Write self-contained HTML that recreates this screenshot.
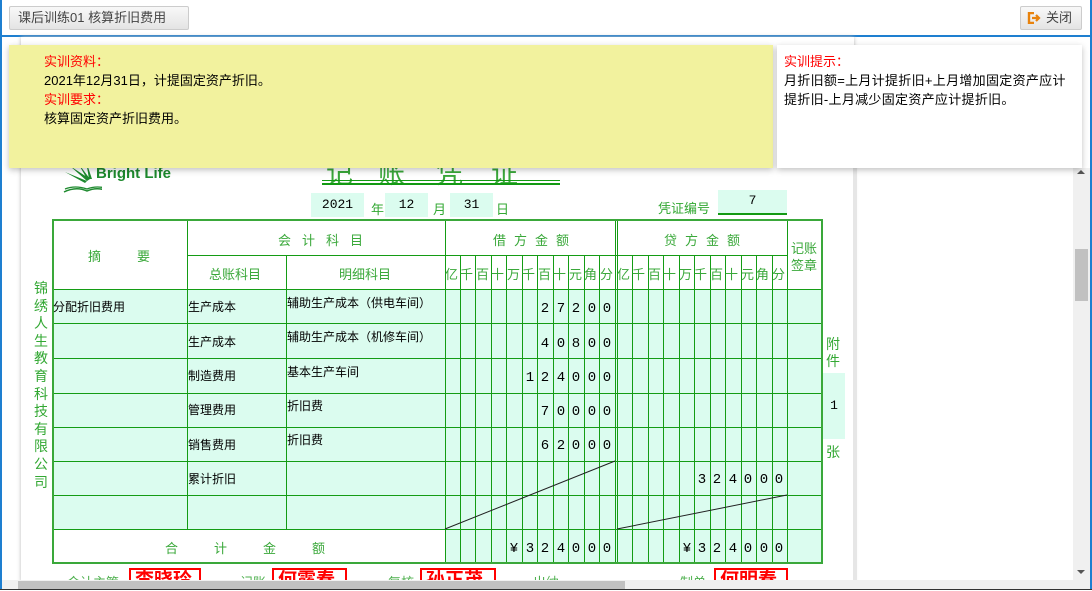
<!DOCTYPE html>
<html><head><meta charset="utf-8"><style>
*{margin:0;padding:0;box-sizing:border-box}
body{width:1092px;height:590px;overflow:hidden;background:#fff;position:relative;font-family:"Liberation Sans","Noto Sans CJK SC",sans-serif;font-size:13px}
.a{position:absolute}
.btn{border:1px solid #ccc;border-radius:2px;background:linear-gradient(#f8f8f8,#e4e4e4);color:#444;font-size:13px;line-height:21px}
.red{color:#f00}
.g{color:#33a833}
.sig{position:absolute;top:568px;border:2px solid #f00;color:#f00;font-weight:bold;font-size:19px;line-height:22px;height:22px;padding:0 4px;background:#fff;overflow:hidden}
.sl{position:absolute;top:572px;color:#4caf4c;font-size:13px}
</style></head><body>
<div class="a" style="left:0;top:0;width:2px;height:590px;background:#1e7fd0"></div>
<div class="a" style="left:1090px;top:0;width:2px;height:590px;background:#1e7fd0"></div>
<div class="a" style="left:0;top:35px;width:1092px;height:2px;background:#1e7fd0"></div>
<div class="a btn" style="left:9px;top:6px;width:180px;height:24px;padding-left:8px">课后训练01 核算折旧费用</div>
<div class="a btn" style="left:1020px;top:6px;width:62px;height:24px;padding-left:25px">关闭
<svg class="a" style="left:6px;top:5px" width="14" height="12" viewBox="0 0 14 12"><path d="M7 1H2v10h5" fill="none" stroke="#e8820c" stroke-width="2.4"/><path d="M5 6h6M9 3l3 3-3 3" fill="none" stroke="#e8820c" stroke-width="2.2"/></svg></div>

<div class="a" style="left:21px;top:37px;width:833px;height:545px;background:#fff;box-shadow:0 0 4px #bbb"></div>
<div class="a" style="left:853px;top:168px;width:4px;height:414px;background:#e6e6e6"></div>

<svg class="a" style="left:62px;top:160px" width="40" height="36" viewBox="0 0 40 36"><path d="M8 6l20 13-3 2z M16 3l12 16h-3z M24 1l6 18h-3z M3 12l22 9-2 2z" fill="#1e8a2e"/><path d="M2 32q12-6 23-1q11-5 23 1" fill="none" stroke="#1e8a2e" stroke-width="1.5"/><path d="M3 29q10-4 22 0q10-4 22 0" fill="none" stroke="#1e8a2e" stroke-width="1.3"/></svg>
<div class="a" style="left:96px;top:165px;color:#1e8a2e;font-weight:bold;font-size:15px">Bright Life</div>
<div class="a g" style="left:326px;top:152px;font-size:27px;color:#3aa83a"><span style="position:absolute;left:0">记</span><span style="position:absolute;left:52px">账</span><span style="position:absolute;left:110px">凭</span><span style="position:absolute;left:165px">证</span></div>
<div class="a" style="left:322px;top:180px;width:238px;height:5px;border-top:1px solid #139a13;border-bottom:2px solid #139a13"></div>

<div class="a" style="left:311px;top:193px;width:53px;height:24px;background:#dbfcef;font-family:'Liberation Mono',monospace;font-size:13px;line-height:24px;text-align:center">2021</div>
<div class="a g" style="left:371px;top:199px">年</div>
<div class="a" style="left:385px;top:193px;width:43px;height:24px;background:#dbfcef;font-family:'Liberation Mono',monospace;font-size:13px;line-height:24px;text-align:center">12</div>
<div class="a g" style="left:433px;top:199px">月</div>
<div class="a" style="left:450px;top:193px;width:43px;height:24px;background:#dbfcef;font-family:'Liberation Mono',monospace;font-size:13px;line-height:24px;text-align:center">31</div>
<div class="a g" style="left:496px;top:199px">日</div>
<div class="a g" style="left:658px;top:198px">凭证编号</div>
<div class="a" style="left:718px;top:190px;width:69px;height:25px;background:#dbfcef;border-bottom:2px solid #139a13;font-family:'Liberation Mono',monospace;font-size:13px;line-height:22px;text-align:center">7</div>

<div class="a g" style="left:33px;top:280px;width:16px;font-size:14px;line-height:17.6px;text-align:center">锦绣人生教育科技有限公司</div>

<div class="a g" style="left:826px;top:336px;font-size:14px;line-height:17px;width:16px">附件</div>
<div class="a" style="left:823px;top:373px;width:22px;height:66px;background:#dbfcef;font-family:'Liberation Mono',monospace;text-align:center;line-height:66px">1</div>
<div class="a g" style="left:826px;top:442px;font-size:14px">张</div>

<svg class="a" style="left:0;top:0" width="1092" height="590" font-family="Liberation Sans,Noto Sans CJK SC,sans-serif">
<rect x="52" y="289" width="770" height="240" fill="#dbfcef"/>
<rect x="445" y="529" width="377" height="34" fill="#dbfcef"/>
<g stroke="#149c14" stroke-width="1" fill="none">
<path d="M187 255.5H787 M52 289.5H822 M52 323.5H822 M52 358.5H822 M52 393.5H822 M52 427.5H822 M52 461.5H822 M52 495.5H822 M52 529.5H822"/>
<path d="M187.5 220V529 M286.5 255V529 M445.5 220V563 M615.5 220V563 M617.5 220V563 M787.5 220V563"/>
<path d="M460.5 255V563M475.5 255V563M491.5 255V563M506.5 255V563M522.5 255V563M537.5 255V563M553.5 255V563M568.5 255V563M584.5 255V563M599.5 255V563"/>
<path d="M632.5 255V563M648.5 255V563M663.5 255V563M679.5 255V563M694.5 255V563M710.5 255V563M725.5 255V563M741.5 255V563M756.5 255V563M772.5 255V563"/>
</g>
<rect x="53" y="220" width="769" height="343" fill="none" stroke="#3aa83a" stroke-width="2"/>
<path d="M445 529L615 461 M617 529L787 495" stroke="#222" stroke-width="1"/>
<g fill="#3aa83a" font-size="13">
<text x="88" y="261">摘</text><text x="137" y="261">要</text>
<text x="278" y="245">会</text><text x="302" y="245">计</text><text x="326" y="245">科</text><text x="350" y="245">目</text>
<text x="493" y="245">借</text><text x="514" y="245">方</text><text x="535" y="245">金</text><text x="556" y="245">额</text>
<text x="664" y="245">贷</text><text x="685" y="245">方</text><text x="706" y="245">金</text><text x="727" y="245">额</text>
<text x="791" y="253">记账</text><text x="791" y="270">签章</text>
<text x="209" y="279">总账科目</text><text x="339" y="279">明细科目</text>
<text x="165" y="553">合</text><text x="214" y="553">计</text><text x="263" y="553">金</text><text x="312" y="553">额</text>
<text y="279" font-size="13"><tspan x="445">亿</tspan><tspan x="460">千</tspan><tspan x="476">百</tspan><tspan x="491">十</tspan><tspan x="507">万</tspan><tspan x="522">千</tspan><tspan x="538">百</tspan><tspan x="553">十</tspan><tspan x="569">元</tspan><tspan x="584">角</tspan><tspan x="600">分</tspan></text>
<text y="279" font-size="13"><tspan x="617">亿</tspan><tspan x="632">千</tspan><tspan x="648">百</tspan><tspan x="663">十</tspan><tspan x="679">万</tspan><tspan x="694">千</tspan><tspan x="710">百</tspan><tspan x="725">十</tspan><tspan x="741">元</tspan><tspan x="756">角</tspan><tspan x="772">分</tspan></text>
</g>
<g fill="#000" font-size="12">
<text x="53" y="311">分配折旧费用</text>
<text x="188" y="311">生产成本</text><text x="287" y="307">辅助生产成本（供电车间）</text>
<text x="188" y="346">生产成本</text><text x="287" y="341">辅助生产成本（机修车间）</text>
<text x="188" y="380">制造费用</text><text x="287" y="376">基本生产车间</text>
<text x="188" y="414">管理费用</text><text x="287" y="410">折旧费</text>
<text x="188" y="449">销售费用</text><text x="287" y="444">折旧费</text>
<text x="188" y="483">累计折旧</text>
</g>
<g fill="#000" font-size="14" font-family="Liberation Mono,monospace" text-anchor="middle">
<text y="312"><tspan x="545">2</tspan><tspan x="561">7</tspan><tspan x="576">2</tspan><tspan x="592">0</tspan><tspan x="607">0</tspan></text>
<text y="347"><tspan x="545">4</tspan><tspan x="561">0</tspan><tspan x="576">8</tspan><tspan x="592">0</tspan><tspan x="607">0</tspan></text>
<text y="381"><tspan x="530">1</tspan><tspan x="545">2</tspan><tspan x="561">4</tspan><tspan x="576">0</tspan><tspan x="592">0</tspan><tspan x="607">0</tspan></text>
<text y="415"><tspan x="545">7</tspan><tspan x="561">0</tspan><tspan x="576">0</tspan><tspan x="592">0</tspan><tspan x="607">0</tspan></text>
<text y="449"><tspan x="545">6</tspan><tspan x="561">2</tspan><tspan x="576">0</tspan><tspan x="592">0</tspan><tspan x="607">0</tspan></text>
<text y="483"><tspan x="702">3</tspan><tspan x="717">2</tspan><tspan x="733">4</tspan><tspan x="748">0</tspan><tspan x="764">0</tspan><tspan x="779">0</tspan></text>
<text y="552"><tspan x="514">¥</tspan><tspan x="530">3</tspan><tspan x="545">2</tspan><tspan x="561">4</tspan><tspan x="576">0</tspan><tspan x="592">0</tspan><tspan x="607">0</tspan></text>
<text y="552"><tspan x="687">¥</tspan><tspan x="702">3</tspan><tspan x="717">2</tspan><tspan x="733">4</tspan><tspan x="748">0</tspan><tspan x="764">0</tspan><tspan x="779">0</tspan></text>
</g>
</svg>

<div class="sl" style="left:67px">会计主管</div><div class="sig" style="left:129px;width:72px">李晓玲</div>
<div class="sl" style="left:240px">记账</div><div class="sig" style="left:272px;width:75px">何露春</div>
<div class="sl" style="left:388px">复核</div><div class="sig" style="left:420px;width:76px">孙正茂</div>
<div class="sl" style="left:533px">出纳</div>
<div class="sl" style="left:680px">制单</div><div class="sig" style="left:714px;width:74px">何明春</div>

<div class="a" style="left:1073px;top:168px;width:17px;height:412px;background:#f0f0f0"></div>
<div class="a" style="left:1075px;top:249px;width:13px;height:52px;background:#c1c1c1"></div>
<div class="a" style="left:1077px;top:170px;border:4px solid transparent;border-bottom:4px solid #555;border-top:0"></div>
<div class="a" style="left:1077px;top:570px;border:4px solid transparent;border-top:4px solid #555;border-bottom:0"></div>
<div class="a" style="left:2px;top:580px;width:1088px;height:10px;background:#f0f0f0"></div>
<div class="a" style="left:18px;top:581px;width:607px;height:8px;background:#c1c1c1"></div>
<div class="a" style="left:0;top:589px;width:1092px;height:1px;background:#333"></div>

<div class="a" style="left:9px;top:45px;width:764px;height:123px;background:#f2f29e;box-shadow:0 2px 6px rgba(0,0,0,.25);padding:7px 0 0 35px;line-height:19px">
<div class="red">实训资料：</div><div>2021年12月31日，计提固定资产折旧。</div><div class="red">实训要求：</div><div>核算固定资产折旧费用。</div></div>
<div class="a" style="left:777px;top:45px;width:305px;height:123px;background:#fff;box-shadow:0 2px 6px rgba(0,0,0,.25);padding:7px 16px 0 7px;line-height:19px">
<div class="red">实训提示：</div><div style="letter-spacing:0.3px">月折旧额=上月计提折旧+上月增加固定资产应计提折旧-上月减少固定资产应计提折旧。</div></div>
</body></html>
